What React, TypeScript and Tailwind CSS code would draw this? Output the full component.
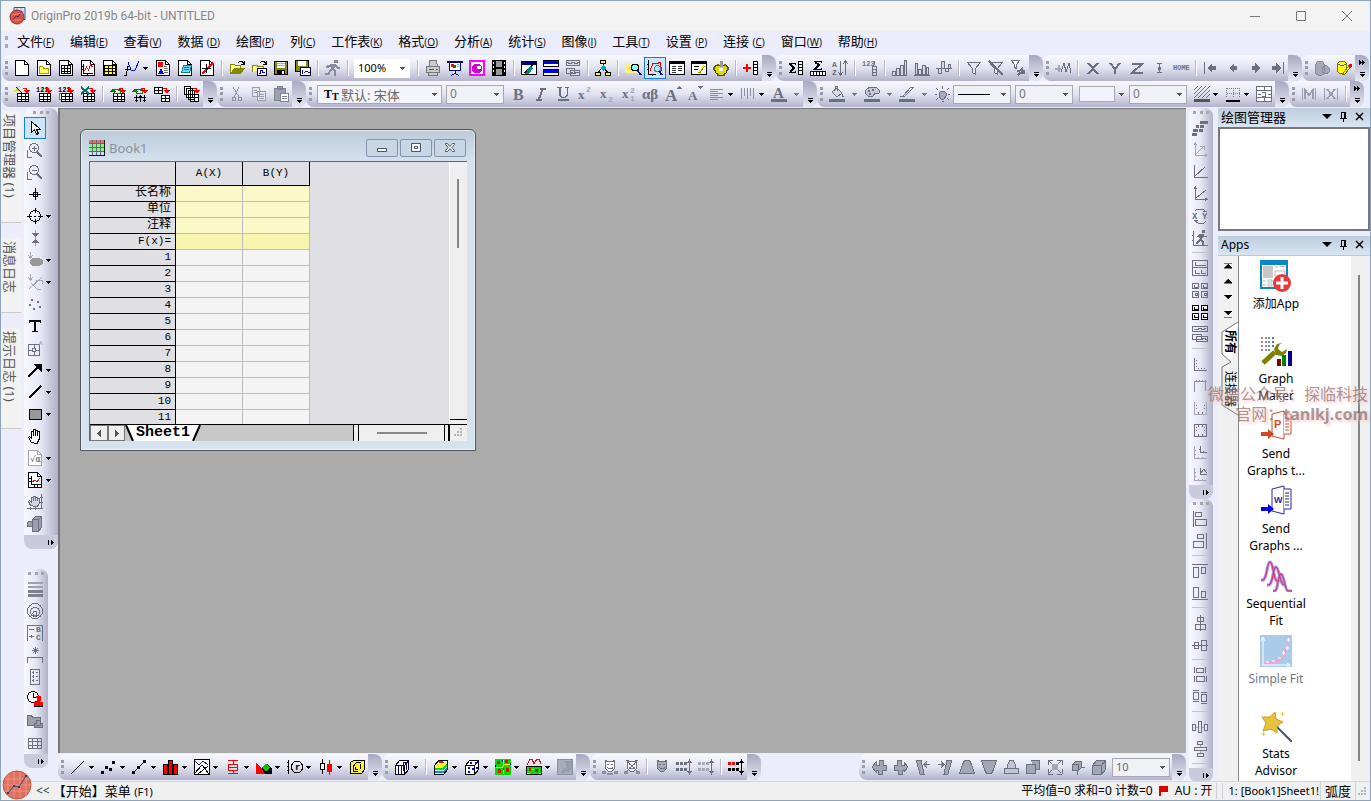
import { Children, type ReactNode } from "react";

const K = "#000";
const G = "#6b7081";
const L = "#a3a6b4";
const R = "#f00";
const Y = "#ff0";
const B = "#00f";
const N = "#000080";
const W = "#fff";
const T = "#008000";
const C = "#5cc";

const p = (d: string, stroke = K, fill = "none", width = 1) => (
  <path d={d} stroke={stroke} fill={fill} strokeWidth={width} />
);
const f = (d: string, fill = K) => <path d={d} fill={fill} />;
const t = (x: number, y: number, text: string, size: number, fill = K, family = "Liberation Mono") => (
  <text x={x} y={y} fontSize={size} fill={fill} fontWeight="bold" fontFamily={family}>
    {text}
  </text>
);

const page = (c = K) => [p("M1.5.5h9l4 4v11h-13z", c, W), p("M10.5.5v4h4", c)];
const sheet = (c = K, fill = W) => [p("M3.5 7.5h11v8h-11zM3.5 10.5h11M3.5 13h11M7.5 7.5v8M11 7.5v8", c, fill)];
const redArrow = [p("M9 2.5h3.5v4", R), f("M10 4h6l-3 4z", R)];
const greenLoop = [p("M2 5v-2h6v2M10 5v2h-6v-2", T), f("M6 3h5l-2 3zM0 6l3-4 3 4z", T)];
const axes = (c = G) => p("M3.5 1v12.5h12M2 3l1.5-2L5 3M13 12l2 1.5-2 1.5", c);
const cube = (c = K, fill = W) => [p("M1.5 6.5l4-5h9v9l-4 5h-9zM1.5 6.5h9v9M10.5 6.5l4-5", c, fill)];
const frameTicks = p("M2.5 2v12.5h12M4 4.5h1M4 7.5h1M4 10.5h1M6.5 12v1M9.5 12v1M12.5 12v1", G);
const mask = (c: string, fill: string) => [
  p("M3.5 1.5l2 1h5l2-1v8l-3 3h-3l-3-3z", c, fill),
  f("M5 5h2v1h-2zM9 5h2v1h-2zM5 8h1v1h4v-1h1v1l-1 1h-4z", c),
];
const dots = (c: string) => f("M0 3h3v3h-3zM4 3h3v3h-3zM8 3h3v3h-3zM0 9h3v3h-3zM4 9h3v3h-3zM8 9h3v3h-3z", c);
const updown = (c: string) => [p("M13.5 2v12", c), f("M11 4l2.5-4 2.5 4zM11 12h5l-2.5 4z", c)];

const icons: Record<string, ReactNode> = {
  "New project": page(),
  "New folder": [page(), p("M3.5 6.5h3l1 1.5h5v5.5h-9z", "#a90", "#ff6")],
  "New workbook": [page(), p("M3.5 5.5h9v8h-9zM3.5 8.5h9M3.5 11h9M6.5 5.5v8M9.5 5.5v8")],
  "New graph": [page(), p("M3.5 4v9.5h9M2 6.5h1M2 9.5h1M7.5 14v1"), p("M4.5 11l2-4 2 3 2-5 2 2", R)],
  "New matrix": [page(), p("M2.5 5.5h11v9h-11zM2.5 8.5h11M2.5 11.5h11M6 5.5v9M10 5.5v9", K, Y)],
  "New function": [p("M0 15.5h2l2-9h2M1 9.5h5"), p("M4 2l3 8h4l4-9", B)],
  "New layout": [page(), f("M3 2h5v5h-5z", R), f("M3 14l3-6 3 6z", B), p("M9 8.5h4M9 10.5h4M9 12.5h4M9 6.5h3", G)],
  "New notes": [page(), p("M4.5 12.5l2-7h8l-2 7zM7 7.5h5M6.5 9.5h5", "#088", "#6df")],
  "New digitizer": [page(), p("M3 14L14 3", R, "none", 2), p("M7.5 4v9M3 8.5h9")],
  Open: [p("M1.5 13.5v-9h4l1 1h5v3", "#880", "#ff8"), f("M1 14l4-6h11l-4 6z", "#880"), p("M9 3l2-2h2l2 3M12 4h3v-3")],
  "Open template": [p("M1.5 12v-7h4l1 1h6v2", "#880", "#ff8"), p("M6.5 8.5h9v7h-9z", K, W), p("M8 13h1v-3h2v2h3", B), p("M9 3l2-2h2l2 3M12 4h3v-3")],
  Save: [p("M1.5 1.5h13v13h-13z", K, "#880"), f("M4 2h8v6h-8z", W), f("M4 10h8v5h-8z"), f("M9 11h2v3h-2z", W), p("M4 3.5h8M4 5.5h8", "#aaa")],
  "Save template": [p("M.5.5h13v11h-13z", K, "#880"), f("M3 1h8v5h-8z", W), p("M5.5 7.5h10v8h-10z", K, W), p("M7 14v-4M9 13l2-2 2 1h2", B)],
  Run: [f("M9 0h4v3h-4zM6 4h5l2 3h2v2h-3l-2-2-1 2 2 2v5h-2v-4l-2-2-3 5h-4v-2h3l3-5-1-2-2 2h-2v-2z", "#888ba0")],
  Print: [p("M4.5 6.5v-6h7l1 6M1.5 6.5h13v6h-13zM3.5 12.5v3h9v-3", "#777", "#ccc"), f("M4 9h5v1h-5zM11 9h2v1h-2z", "#555")],
  Slideshow: [p("M.5 1.5h15M2.5 2v8.5h11V2M8 10.5v3l-4 2M8 13.5l4 2", N, W), f("M0 1h16v2H0z", N), f("M4 4h3v3H4z", R), f("M6 5h3v3H6z", T), p("M10 4.5h2M10 6.5h2", C)],
  Video: [f("M0 0h16v16H0z", "#f0f"), f("M2 2h12v12H2z", W), f("M5 4h6l2 3v3l-3 3H5l-2-3V6z", "#c0c"), f("M8 6h4v3H8z", W)],
  "Film strip": [f("M1 0h14v16H1z"), f("M5 1h6v6H5zM5 9h6v6H5z", "#999"), f("M2 2h1v2H2zM2 6h1v2H2zM2 10h1v2H2zM13 2h1v2h-1zM13 6h1v2h-1zM13 10h1v2h-1z", W)],
  "Digitize image": [p("M.5 1.5h15v13H.5z", K, W), f("M1 2h14v3H1z", N), p("M4 13c1-3 3-2 4-4l5-6", K, "none", 2), f("M9 6l3 2-4 6H4z", "#088")],
  "Tile windows": [p("M.5.5h15v6H.5zM.5 9.5h15v6H.5z", K, W), f("M1 1h14v3H1zM1 10h14v3H1z", B)],
  "Duplicate graph": [p("M1.5.5h13v5h-13zM1.5 8.5h8v5h-8zM5.5 10.5h9v5h-9z", G, "#dde"), p("M2 2l3 2 3-2 3 2 3-2M6 12l3 2 3-2 2 1", G)],
  "Project explorer": [p("M8 4v3M3.5 12l4-5 5 5"), p("M5.5.5h5v3h-5zM.5 12.5h5v3h-5zM10.5 12.5h5v3h-5z", K, Y), f("M5 8l3-3 3 3-3 3z", "#0aa")],
  "Find in project": [f("M0 3h5v1h10v9H0z", "#fe7"), p("M6.5 7.5a3.5 3.5 0 1 0 7 0a3.5 3.5 0 1 0-7 0", K, "#8ff"), p("M12 10l4 5", N, "none", 2)],
  "Quick view": [p("M1.5 0v14.5h7M0 4.5h1M0 9.5h1M5.5 14v2"), p("M3 11l3-8 4 1 3-2 2 9", R), p("M7.5 8.5a3 3 0 1 0 6 0a3 3 0 1 0-6 0", G, "#aef"), p("M12 11l3 4", N, "none", 2)],
  "Results log": [p("M.5 1.5h15v13H.5z", K, W), f("M1 2h14v2H1z"), p("M3 6.5h4M9 6.5h4M3 8.5h4M9 8.5h4M3 10.5h4M9 10.5h4M3 12.5h4", "#333")],
  "Command window": [p("M.5 1.5h15v13H.5z", K, W), f("M1 2h14v2H1z"), p("M3 6.5h5M3 9.5h4"), p("M8 13l5-7", "#a80", "none", 2), p("M8 12l5-7", Y)],
  "Code builder": [p("M3 5h10l2 3-2 5-3 2H6l-3-2-2-5z", "#440", "#dd0"), f("M6 8h4v3H6z", W), f("M7 1h3v6H7z", "#999"), f("M0 7h2v3H0zM14 7h2v3h-2zM4 14h2v2H4zM10 14h2v2h-2zM4 4h2v2H4zM11 4h2v2h-2z", "#660")],
  "Add columns": [p("M0 8h8M4 4v8", R, "none", 2), p("M10.5 1.5h4v13h-4zM10.5 4.5h4M10.5 7.5h4M10.5 10.5h4", K, W)],
  "Sum columns": [p("M7.5 5V3.500h-6l4 4.500-4 4.500h6V11"), p("M2 4l4 4-4 4", K, "none", 2), p("M10.5 1.5h4v13h-4zM10.5 4.5h4M10.5 7.5h4M10.5 10.5h4", K, W)],
  "Sum rows": [p("M11.5 3V1.500h-7l4 3.500-4 4h7V8"), p("M5 2l4 3-4 4", K, "none", 2), p("M.5 11.5h15v4H.5zM3.5 12v3M6.5 12v3M9.5 12v3M12.5 12v3", K, W)],
  Sort: [t(0, 7, "A", 8, G), t(0, 15, "Z", 8, G), p("M8.5 1v13M6 12l2.5 3L11 12M13.5 15V2M11 4l2.5-3L16 4", G)],
  "Set column values": [t(0, 6, "123", 7, G), p("M10.5 6.5h4v9h-4zM10.5 9.5h4M10.5 12.5h4M12.5 1v4", G)],
  "Column stats": [p("M.5 15.5v-4h3v4zM4.5 15.5v-7h3v7zM8.5 15.5v-10h3v10zM12.5 15.5v-15h2v15z", G, "#d5d7e3")],
  "Row stats": [p("M1.5 14.5v-11h2v11zM4.5 14.5v-5h3v5zM8.5 14.5v-9h3v9zM12.5 14.5v-7h2v7zM0 15.5h16", G, "#d5d7e3")],
  Normalize: [p("M0 8.5h16M2.5 8.5v5h3v-5zM5.5 8.5v-7h3v7zM9.5 8.5v3h3v-3zM12.5 8.5v-4h2v4z", G, "#d5d7e3")],
  "Data filter": [p("M1.5 2.5h13l-5 6v6l-3-2v-4z", G, "#e4e5ee")],
  "Disable filter": [p("M1.5 2.5h13l-5 6v6l-3-2v-4z", G, "#e4e5ee"), p("M1 1l14 14", G, "none", 2)],
  "Reapply filter": [p("M1.5.5h8l-3 4v4l-2-1v-3z", G, W), p("M7 10.5h3l2-2v2h3M15 12.5h-5l-2 3", G, "none", 2)],
  "Add marker": [p("M0 8.5h6M3.5 5v7", L, "none", 2), p("M6 12l3-9 2 9 3-9 2 10", G)],
  "Set as X": p("M3 3l10 11M13 3L3 14", G, "none", 2),
  "Set as Y": p("M3 3l5 6v5M13 3L8 9", G, "none", 2),
  "Set as Z": p("M3 4h10L3 13h11", G, "none", 2),
  "Set as error": p("M6 3.5h5M8.5 3v10M6 12.5h5M7.5 7v3M9.5 7v3", G),
  Home: t(0, 10, "HOME", 7, G),
  "First column": [f("M1 2h1v12H1zM4 8l5-5v3h4v4H9v3z", G)],
  "Previous column": f("M4 8l5-5v3h3v4h-3v3z", G),
  "Next column": f("M13 8L8 3v3H5v4h3v3z", G),
  "Last column": f("M14 2h1v12h-1zM12 8L7 3v3H3v4h4v3z", G),
  "Query data": [p("M1.5 4.5l2-3h5l2 3v9l-3 2h-3l-3-2zM8 8l4-3 3 3v4l-3 2-4-2z", "#888b9b", "#a5a8b8")],
  "SQL editor": [p("M1.5 3.5l2-2h5l2 2v8l-2 2h-5l-2-2zM2 4l2 1h4l2-1", "#770", Y), p("M7 15l7-9", "#770", "none", 3), p("M8 14l6-8", Y), f("M13 4h3v3h-3z", R)],
  "Import wizard": [sheet(), redArrow, p("M0 4h6M3 0v6M0 6l6-6", "#dd0"), p("M2 1l6 6")],
  "Import ASCII": [t(0, 6, "123", 7), sheet(), redArrow],
  "Import many": [t(0, 6, "123", 7), p("M1.5 7.5h9v6h-9z", G, W), sheet(), redArrow],
  "Import Excel": [sheet(), redArrow, p("M1 1l8 7M9 1L1 8", "#077", "none", 2)],
  Reimport: [sheet(), greenLoop, redArrow],
  "Reimport directly": [greenLoop, p("M4.5 9v7M8.5 9v7M12.5 9v7M2 11.5h12M3 14.5h3M7 10.5h3M11 14.5h3"), redArrow],
  "Import to sheet": [p("M.5 1.5h8v6h-8zM.5 4.5h8M4.5 1.5v6M7.5 9.5h8v6h-8zM7.5 12.5h8M11.5 9.5v6", K, W), redArrow],
  "Batch processing": [p("M.5.5h6v8h-6zM2.5 2.5h6v9h-6zM4.5 4.5h6v9h-6zM6.5 8.5h8v7h-8zM6.5 11.5h8M10.5 8.5v7", K, W), redArrow],
  Cut: p("M4 1l6 10M10 1L5 11M3.5 11.5h3v3h-3zM9.5 11.5h3v3h-3z", "#8e91a2"),
  Copy: p("M1.5 1.5h7v9h-7zM6.5 5.5h8v9h-8zM8 8.5h5M8 10.5h5M8 12.5h5M3 4.5h3M3 6.5h3", "#999cab", "#e4e5ee"),
  Paste: [p("M1.5 2.5h11v12h-11zM4.5.5h5v3h-5z", "#7f8293", "#9da0b0"), p("M7.5 7.5h8v8h-8zM9 10.5h5M9 12.5h5", "#7f8293", W)],
  Bold: t(2, 14, "B", 16, G, "Liberation Serif"),
  Italic: p("M7 2.5h6M3 13.5h6M9.5 3L6 13", G, "none", 2),
  Underline: [p("M2 1.5h5M10 1.5h4M12.5 2v7l-2 2h-4l-2-2", G), p("M5 2v7M3 14h11", G, "none", 2)],
  Superscript: [t(1, 13, "x", 13, G, "Liberation Serif"), t(9, 6, "2", 8, L)],
  Subscript: [t(1, 12, "x", 13, G, "Liberation Serif"), t(9, 16, "2", 8, L)],
  "Super-subscript": [t(1, 12, "x", 13, G, "Liberation Serif"), t(9, 7, "2", 8, L), t(9, 15, "1", 8, L)],
  Greek: t(-1, 13, "αβ", 15, G, "Liberation Serif"),
  "Increase font": [t(0, 15, "A", 17, G, "Liberation Serif"), f("M11 3l3-3 3 3z", G)],
  "Decrease font": [t(1, 14, "A", 13, G, "Liberation Serif"), f("M11 0h5l-3 3z", G)],
  "Align left": p("M1 3.5h13M1 5.5h8M1 7.5h13M1 9.5h8M1 11.5h13M1 13.5h8", "#8b8e9c"),
  "Vertical lines": p("M1.5 2v11M4.5 2v8M7.5 2v11M10.5 2v8M13.5 2v11", "#8b8e9c"),
  "Font colour": [t(2, 12, "A", 15, G, "Liberation Serif"), f("M0 13h16v3H0z", G)],
  "Fill colour": [p("M3 6l5-4 5 5-5 4zM6 4V0h2v5", G, "#ddd"), f("M13 7l2 4h-2zM0 13h16v3H0z", G)],
  "Pattern colour": [p("M2 4l4-3h6l3 3v3l-2 1-2-1-2 3H4L1 7z", G, "#c7c9d5"), f("M4 4h2v2H4zM8 3h2v2H8zM5 7h2v2H5zM0 13h16v3H0z", G)],
  "Line colour": [p("M4 10l8-9h3l-9 9zM1 10l3 1", G, W), f("M0 13h16v3H0z", G)],
  Lighting: [p("M5 7l2-2h3l2 2v3l-2 3H7l-2-3z", G, "#a9acb9"), p("M8.5 0v3M1 8.5h2M14 8.5h2M2 2l2 2M15 2l-2 2M2 14l2-2M15 14l-2-2M8 15.5h2", G)],
  Hatch: [p("M0 4l4-4M0 8l8-8M0 12L12 0M4 12L16 0M8 12l8-8M12 12l4-4", G), f("M0 13h16v3H0z", "#555")],
  "Border style": [<path key="dots" d="M1.5 2.5h13M1.5 7.5h13M1.5 2v10M8.5 2v10M14.5 2v10" stroke="#777" strokeDasharray="1 1" />, f("M1 14h14v2H1z")],
  "Merge cells": [p("M.5.5h15v15H.5zM0 4.5h16M0 11.5h16M8 0v4M8 12v4", G, W), p("M2 8.5h3M12 8.5h3M6 6.5h3v4H6", G)],
  "Mask M": [p("M1.5 2v12M14.5 2v12", "#9a9dac"), p("M4 13V4l4 5 4-5v9", "#9a9dac", "none", 2)],
  "Mask X": [p("M1.5 2v12M14.5 2v12", "#9a9dac"), p("M4 3l8 10M12 3L4 13", "#9a9dac", "none", 2)],

  Pointer: [p("M4.5 1.5v11l3-3 2 5 2-1-2-4h4z", K, W)],
  "Zoom in": [p("M2.5 6a4.5 4.5 0 1 0 9 0a4.5 4.5 0 1 0-9 0M7 3.5v5M4.5 6h5M.5 8v7h4", G), p("M10 10l5 5", G, "none", 2)],
  "Zoom out": [p("M2.5 6a4.5 4.5 0 1 0 9 0a4.5 4.5 0 1 0-9 0M4.5 6h5M.5 8v7h4", G), p("M10 10l5 5", G, "none", 2)],
  "Screen reader": p("M2 8.5h12M8.5 2v12M6.5 6.5h4v4h-4z"),
  "Data reader": p("M2.5 8a5.5 5.5 0 1 0 11 0a5.5 5.5 0 1 0-11 0M0 8h5M11 8h5M8 0v5M8 11v5M7 8h2"),
  "Data selector": [p("M8.5 0v16", L), f("M5 3h7L8.5 7zM5 13h7L8.5 9z", G)],
  "Mask points": [p("M3.5 0v6M1 3l2.5 3L6 3", L), f("M3 8l3-2h6l4 2v4l-4 2H6l-3-2z", "#999")],
  "Draw data": [p("M3.5 0v6M1 3l2.5 3L6 3M2 15L15 3M4 9l6 6h4M9 6h6v4", L)],
  Points: f("M4 3h2v2H4zM10 5h2v2h-2zM2 8h2v2H2zM12 10h2v2h-2zM6 12h2v2H6z", G),
  Text: [p("M2.5 5V2.5h11V5M5 13.5h6"), p("M8 2v12M3 3h10", K, "none", 2)],
  "Insert graph": [p("M1.5 4.5h11v11h-11zM1.5 10h4M8 10h5M7 4.5V8M7 11v4M5.5 8.5h3v3h-3z", G), t(12, 5, "A", 6, L)],
  Arrow: [p("M1 15L12 4", K, "none", 2), f("M6 2h9v9z")],
  Line: p("M2 14L14 2", K, "none", 2),
  Rectangle: p("M2.5 3.5h12v10h-12z", K, "#999"),
  Hand: p("M4.5 14.5l-3-5 1-1 2 2V3.5h1.5v4-6h2v6-5h2v5-4h2v8l-2 4z", K, W),
  "Insert equation": [page(L), t(3, 12, "√α", 8, "#888", "DejaVu Sans")],
  "Insert plot": [page(), p("M4.5 4v8.5h9M2 6.5h2M2 9.5h2M7.5 13v2M10.5 13v2"), p("M5 10l3-2 2 2 3-4", R)],
  "Move axes": [p("M3.5 11.5l-2-4 1-1 2 2V3h1.5v4-5h2v5-4h2v4-3h2v6l-2 3zM14.5 0v15M0 14.5h16M3.5 13v3M8.5 13v3M13 3.5h3M13 8.5h3", G, "#d4d6e1")],
  "Rotate 3D": p("M5.5 3.5l3-3h6v11l-3 4h-6zM5.5 3.5h6v12M11.5 3.5l3-3M5 5H2L.5 7v3h4", G, "#9c9fae"),
  "Line width": [f("M1 1h15v2H1zM1 5h15v2H1z", "#9da1af"), f("M1 9h15v3H1zM1 13h15v3H1z", "#7c8090")],
  Contour: p("M.5 8a7.5 7.5 0 1 0 15 0a7.5 7.5 0 1 0-15 0M3.5 9a4.5 4.5 0 1 0 9 0a4.5 4.5 0 1 0-9 0M6 10.5a2 2 0 1 0 4 0a2 2 0 1 0-4 0", G),
  Legend: [p("M15.5 16V.5H.5V16M2 4.5h5M2 11.5h5M4.5 10v3", G), t(9, 7, "B", 8, G), t(9, 15, "C", 8, G)],
  Asterisk: p("M.5 16v-5.5h15V16M8.5 0v7M5 3.5h7M6 1l5 5M11 1L6 6", G),
  Scale: p("M3.5.5h9v15h-9zM5 3.5h2M9 3.5h2M5 7.5h2M9 7.5h2M5 11.5h2M9 11.5h2M6 2v3M6 6v3M6 10v3", G),
  "Time stamp": [p("M.5 6a5.5 5.5 0 1 0 11 0a5.5 5.5 0 1 0-11 0M6 2v4h3", K, W), f("M9 5h5v4l-1 2h3v4H7v-4h3V9z", R), p("M7 15.5h9")],
  "Project stamp": p("M.5 2.5h4l1 2h8v8H.5zM9.5 7.5h4v3h2v4H7.5v-4h2z", G, "#9c9fae"),
  "New table": p("M1.5 3.5h13v10h-13zM1.5 6.5h13M1.5 10.5h13M5.5 3.5v10M10.5 3.5v10", G),

  "Slide layers": f("M8 1h8v3H8zM4 5h3v3H4zM8 5h4v3H8zM1 9h5v3H1zM7 9h4v3H7zM0 13h5v3H0z", G),
  "3D axes": [axes(L), p("M4 12l8-8M8 4h4v4", L)],
  "Axes right": [p("M2.5 1v12.5h13", G), p("M3 12L13 3", G)],
  "Axes up": [axes(), p("M4 12L14 4", G)],
  "Exchange XY": [t(0, 11, "X", 9, G), t(10, 11, "Y", 9, G), p("M3 3l2-2h6l2 2M3 13l3 2h6l2-2M11 3.5h4M2 12.5h4", G)],
  "Run axes": [p("M1.5 1v14.5H16M0 5.5h2M0 10.5h2", G), f("M10 0h3v3h-3zM7 4h5v2h3v1h-4l-1 3 2 1v4h-2v-3l-2-1-2 3H4v-1l4-5-3-1z", G)],
  "One panel": p("M.5.5h15v15H.5zM.5 7.5h15M3.5 2v3h10M3.5 10v3h4M9.5 10v3h4", G),
  "Four panels": p("M.5 1.5h6v5h-6zM9.5 1.5h6v5h-6zM.5 9.5h6v6h-6zM9.5 9.5h6v6h-6zM2.5 3v2h3M11.5 3v2h3M3 11.5h2v2H3zM12 11.5h2v2h-2z", G),
  "Six panels": p("M.5 1.5h6v5h-6zM9.5 1.5h6v5h-6zM.5 9.5h6v6h-6zM9.5 9.5h6v6h-6zM2.5 3v2h3M11.5 3v2h3M2.5 11v2h3M11.5 11v2h3", K, W),
  "Merge graphs": p("M.5.5h15v5H.5zM.5 8.5h9v5h-9zM4.5 10.5h11v5h-11zM2 3l3 1 3-2 3 2 3-2M6 13l3 1 3-2 3 2", G),
  "Frame left": frameTicks,
  "Frame top": p("M2.5 14V3.5h12M4.5 2v2M7.5 2v2M10.5 2v2M13.5 2v11", "#8f92a1"),
  "Frame right": [p("M2.5 2v12.5h12V2", L), p("M4 5.5h1M4 8.5h1M12 5.5h1M12 8.5h1M6.5 12v2M10.5 12v2", G)],
  "Frame all": [p("M2.5 2.5h12v12h-12z", G), p("M4 5.5h1M4 8.5h1M12 5.5h1M12 8.5h1M6.5 12v2M10.5 12v2M6.5 3v2M10.5 3v2", G)],
  "Inset axes": [p("M2.5 2v12.5h12M2 6.5h2M2 10.5h2M6.5 13v2M10.5 13v2", L), p("M8.5 2v6h6M7 5.5h2M11.5 7v2", G)],
  "Inset image": [p("M2.5 2v12.5h12M2 6.5h2M2 10.5h2M6.5 13v2M10.5 13v2", L), p("M8.5 2v6h6M9 7l3-4 3 4", G)],
  "Align lefts": p("M1.5 0v16M3.5 1.5h6v4h-6zM3.5 8.5h11v6h-11z", G),
  "Align rights": p("M14.5 0v16M5.5 1.5h6v4h-6zM1.5 8.5h10v6h-10z", G),
  "Align tops": p("M0 1.5h16M1.5 4.5h5v10h-5zM9.5 4.5h4v6h-4z", G),
  "Align bottoms": p("M0 14.5h16M1.5 2.5h5v10h-5zM9.5 6.5h4v6h-4z", G),
  "Center vertical": p("M8.5 0v16M5.5 2.5h6v4h-6zM3.5 9.5h10v5h-10z", G),
  "Center horizontal": p("M0 8.5h16M2.5 5.5h4v6h-4zM9.5 3.5h5v10h-5z", G),
  "Same width": p("M2.5 0v6M13.5 0v6M4.5 1.5h7v4h-7zM2.5 9v6M14.5 9v6M4.5 9.5h8v5h-8z", G),
  "Same height": p("M1 1.5h6M1.5 3.5h5v7h-5zM9.5 5.5h5v7h-5zM9 14.5h6M1 12.5h6M9 3.5h6", G),
  "Distribute across": [p("M0 8.5h16", L), p("M.5 5.5h3v6h-3zM6.5 2.5h3v11h-3zM12.5 5.5h3v6h-3z", G, "#e4e5ee")],
  "Distribute down": [p("M8.5 0v16", L), p("M5.5.5h5v3h-5zM2.5 6.5h12v3h-12zM5.5 12.5h6v3h-6z", G, "#e4e5ee")],

  "Line plot": p("M1 15L14 2"),
  Scatter: f("M0 12h3v3H0zM4 7h3v3H4zM8 9h3v3H8zM11 2h3v3h-3z"),
  "Line + symbol": [p("M1 14L13 2"), f("M0 12h3v3H0zM5 7h3v3H5zM11 1h3v3h-3z")],
  "Column plot": p("M.5 15.5v-10h4v10zM5.5 15.5v-14h4v14zM10.5 15.5v-10h4v10z", K, R),
  "Multi panel": [p("M.5.5h15v15H.5z", K, W), p("M1 2l4 4 4-4 5 4", B), p("M1 14L8 6l7 9M4 15l10-8")],
  "Box chart": p("M3 1.5h10M3 14.5h10M8 1v4M8 12v3M3.5 5.5h9v6h-9zM4 8.5h8", R),
  "Area plot": [f("M0 15V5l5 4 6-4 5 4v6z"), f("M0 15V3l6 7 3 5z", R), f("M6 9l4-5 4 5-4 3z", "#0c0")],
  Polar: [p("M1.5 1v14M0 3.5h1M0 7.5h1M0 11.5h1M4.5 8a5.5 6 0 1 0 11 0a5.5 6 0 1 0-11 0"), t(8, 11, "r", 9)],
  Candlestick: [p("M4.5 0v15"), p("M2.5 4.5h4v6h-4z", K, W), p("M11.5 1v15", R), p("M9.5 5.5h4v7h-4z", R, R)],
  Template: [p("M1.5 3.5l3-2h11v9l-3 4h-11zM4 8l3-4 5-1", K, "#fe3"), p("M4 6v6h5M6 8v2h3M11 5v5")],
  "3D bars": [cube(), p("M4.5 15V6h3v9M9.5 12V3h3v8", N)],
  "3D surface": [p("M1.5 6.5l4-5h9v9l-4 5h-9z", K, W), f("M5 2h4l2 2H6z", R), f("M4 5h6l4-2v2l-4 3H3z", Y), f("M2 9h7l5-4v3l-4 3H2z", "#0d0"), f("M2 12h8l4-3v1l-4 4H2z", "#08f")],
  "3D scatter": [cube(), f("M4 8h2v2H4zM8 9h2v2H8zM6 3h2v2H6zM11 3h2v2h-2zM4 12h2v2H4zM12 8h2v2h-2z", B)],
  Heatmap: [f("M0 0h16v16H0z", "#0d0"), f("M2 2h3v3H2zM10 1h3v3h-3zM3 10h3v4H3zM11 9h3v4h-3z", R), p("M1 8.5h6l2-3h6M8 1v5M8 11v4", Y), f("M7 1h1v2H7zM0 6h1v2H0zM15 4h1v2h-1zM8 9h1v2H8z", B)],
  "Profile plot": [p("M1 6l3-6h2l2 5 3-5h2l2 5", R), p("M.5 7.5h15v8H.5z", K, "#0d0"), f("M3 9h2v3H3zM9 10h3v3H9z", R), p("M6 10h2M13 14h2M1 14h3", Y)],
  "Image plot": [f("M0 0h16v16H0z", "#8a8e9c"), f("M1 1h14v14H1z", "#a9acb9"), f("M8 2h7v7l-4 4-7 1 1-3 5-3z", "#999caa")],
  "Mask range": [mask(G, W), f("M0 12h4v3H0zM12 12h4v3h-4zM5 14h6v2H5z", "#8b8e9d")],
  "Unmask range": [mask(G, W), f("M0 12h4v3H0zM12 12h4v3h-4z", "#8b8e9d"), p("M2 1l12 12M14 1L2 13", G)],
  "Mask colour": mask(G, "#a9acb9"),
  "Swap mask": [dots(G), updown(G)],
  "Hide mask": [dots(L), updown(G)],
  "Disable mask": [dots(K), f("M0 3h3v3H0zM4 3h3v3H4z", R), updown(K)],
  "Flip left": p("M1 8l4-5v3h3v-5h4v5h3v5h-4v4H7v-4H5v2z", G, L),
  "Flip right": p("M15 8l-4-5v3H8V1H4v5H1v5h4v4h4v-4h2v2z", G, L),
  "Rotate left": p("M1 1h5l3 14H5L2 4zM9 5.5h6M12 2l-3 3.5L12 9", G, L),
  "Rotate right": p("M15 1h-5L7 15h4l3-11zM1 5.5h6M4 2l3 3.5L4 9", G, L),
  Widen: p("M.5 14.5h15l-3-9-2-4h-5l-2 4z", G, L),
  Narrow: p("M.5 1.5h15l-3 9-2 4h-5l-2-4z", G, L),
  "Stretch up": p("M1.5 14.5h14v-5h-3v-3l-2-5h-4l-2 5v3h-3zM4 9.5h8", G, "#c3c5d2"),
  Perspective: p("M1.5 5.5h9v9h-9zM5.5 1.5h9v9h-4", G, L),
  "Fit frame": [p("M1 1h5M1 1v5M15 1h-5M15 1v5M1 15v-5M1 15h5M15 15h-5M15 15v-5M2 2l12 12M14 2L2 14", G), f("M5 5h6v6H5z", L)],
  "Reset rotation": p("M3.5 5.5h6v6h-6zM3.5 5.5l3-3h6v6l-3 3M8 12v4M12 8h4", G, L),
  "Reset 3D": cube(G, L),
};

function Icon({ name }: { name: string }) {
  return (
    <svg className="overflow-visible" width="16" height="16" viewBox="0 0 16 16" fill="none" shapeRendering="crispEdges">
      {Children.toArray(icons[name])}
    </svg>
  );
}

function Caret({ color = K }: { color?: string }) {
  return (
    <svg width="5" height="3" viewBox="0 0 5 3" shapeRendering="crispEdges">
      <path d="M0 0h5v1H4v1H3v1H2V2H1V1H0z" fill={color} />
    </svg>
  );
}

// A trailing "+" gives a tool a drop-down arrow, "*" a greyed one; "|" is a divider.
function Tool({ item, vertical }: { item: string; vertical?: boolean }) {
  if (item === "|") {
    return vertical ? (
      <span className="mx-[3px] mt-[3px] mb-1 h-px w-[18px] flex-none bg-[#c4c2c4]" />
    ) : (
      <span className="mx-[3px] box-content h-4 w-px flex-none border-r border-white bg-[#b9b8c2]" />
    );
  }
  const name = item.replace(/[+*]$/, "");
  const open = item.endsWith("+");
  const grey = item.endsWith("*");
  const active = name === "Pointer" || name === "Quick view";
  return (
    <span className="flex flex-none items-center">
      <button
        aria-label={name}
        className={`flex h-[22px] w-[22px] flex-none items-center justify-center ${
          active ? "border border-[#1580d8] bg-[#cde5f8]" : ""
        }`}
      >
        <Icon name={name} />
      </button>
      {(open || grey) && (
        <button aria-label={`${name} options`} className={`flex flex-none ${open ? "w-[9px]" : "w-[13px] justify-center"}`}>
          <Caret color={open ? K : "#777a86"} />
        </button>
      )}
    </span>
  );
}

interface BarProps {
  items?: (string | ReactNode)[];
  chevron?: boolean;
  className?: string;
}

function Bar({ items = [], chevron, className = "" }: BarProps) {
  return (
    <div className={`flex h-[26px] flex-none items-stretch rounded-lg bg-linear-to-b from-[#f8f9ff] via-[#e2e3f0] to-[#b3b4cb] ${className}`}>
      <span className="mx-[3px] my-[6px] w-[3px] flex-none border-l-3 border-dotted border-[#9b9ca6]" />
      <div className="flex items-center">
        {items.map((item, i) => (typeof item === "string" ? <Tool key={i} item={item} /> : <span key={i} className="flex-none">{item}</span>))}
      </div>
      <button
        aria-label="Toolbar options"
        className="ml-auto flex w-[14px] flex-none flex-col items-center justify-end gap-px rounded-r-lg bg-linear-to-b from-[#a8a9c2] to-[#e6e7f3] pb-1"
      >
        {chevron && (
          <svg className="mb-[6px]" width="6" height="5" shapeRendering="crispEdges">
            <path d="M0 0h1v1h1v1h1v1H2v1H1v1H0zM3 0h1v1h1v1h1v1H5v1H4v1H3z" />
          </svg>
        )}
        <span className="h-px w-[5px] bg-black" />
        <Caret />
      </button>
    </div>
  );
}

function SideBar({ items, wide }: { items: string[]; wide?: boolean }) {
  return (
    <div
      className={`flex flex-none flex-col overflow-hidden rounded-lg bg-linear-to-r from-[#f8f9ff] via-[#e6e7f3] to-[#b0b1c8] ${
        wide ? "w-[34px]" : "w-6"
      }`}
    >
      <span className={`mx-1 my-[3px] h-[3px] w-4 flex-none border-t-3 border-dotted border-[#a5a5ae] ${wide ? "self-center" : ""}`} />
      {items.map((item, i) => (
        <Tool key={i} item={item} vertical />
      ))}
      <button aria-label="Toolbar options" className="flex h-[14px] flex-none items-center justify-end gap-px bg-[#c9cadb] pr-[3px]">
        <span className="h-[5px] w-px bg-black" />
        <span className="-rotate-90">
          <Caret />
        </span>
      </button>
    </div>
  );
}

interface ComboProps {
  label: string;
  value: string;
  className: string;
  children?: ReactNode;
}

function Combo({ label, value, className, children }: ComboProps) {
  return (
    <span className={`relative block h-[19px] border ${className}`}>
      <select aria-label={label} className="block h-full w-full appearance-none pr-4 pl-[3px] outline-none">
        <option>{value}</option>
      </select>
      <span className="pointer-events-none absolute top-[7px] right-1">
        <Caret color="#555" />
      </span>
      {children}
    </span>
  );
}

const menus = [
  ["文件", "F"], ["编辑", "E"], ["查看", "V"], ["数据 ", "D"], ["绘图", "P"], ["列", "C"], ["工作表", "K"], ["格式", "O"],
  ["分析", "A"], ["统计", "S"], ["图像", "I"], ["工具", "T"], ["设置 ", "P"], ["连接 ", "C"], ["窗口", "W"], ["帮助", "H"],
];

function Title() {
  return (
    <header className="flex h-[30px] flex-none items-center bg-[#f3f3f3] pl-2">
      <svg width="18" height="18" viewBox="0 0 18 18">
        <path d="M5 .5h11v12H5z" fill="#dce8ff" stroke="#2454a5" />
        <path d="M8 1v12M12 1v12M5 5h11M5 9h11" stroke="#92ade0" />
        <circle cx="8" cy="10" r="7" fill="#d95144" stroke="#9f3028" />
        <path d="M4 13l3-4 2 1 4-6" stroke="#46365f" fill="none" />
        <path d="M3 8l10-2M4 13h8" stroke="#ff9b85" strokeWidth=".7" />
      </svg>
      <h1 className="ml-1 font-['Roboto','Noto_Sans',sans-serif] text-xs text-[#858585]">OriginPro 2019b 64-bit - UNTITLED</h1>
      <div className="mr-3 ml-auto flex gap-6 text-[#777]">
        <button aria-label="Minimize" className="flex h-[22px] w-[22px] items-center justify-center">
          <span className="h-px w-[10px] bg-current" />
        </button>
        <button aria-label="Maximize" className="flex h-[22px] w-[22px] items-center justify-center">
          <span className="h-[10px] w-[10px] rounded-[1px] border border-current" />
        </button>
        <button aria-label="Close" className="flex h-[22px] w-[22px] items-center justify-center">
          <svg width="10" height="10" stroke="currentColor">
            <path d="M0 0l10 10M10 0L0 10" />
          </svg>
        </button>
      </div>
    </header>
  );
}

const rowLabels = ["长名称", "单位", "注释", "F(x)=", "1", "2", "3", "4", "5", "6", "7", "8", "9", "10", "11"];

function Workbook() {
  return (
    <section className="absolute top-[20px] left-[20px] flex h-[322px] w-[396px] flex-col rounded-t-md border border-[#50545a] bg-linear-to-b from-[#bccbda] via-[#d5e2ef] via-10% to-[#d5e2ef] px-2 pb-[9px] ring-1 ring-white/60 ring-inset">
      <div className="flex h-[31px] flex-none items-center pt-[5px]">
        <svg width="16" height="16" shapeRendering="crispEdges">
          <path d="M0 0h16v16H0z" fill="#151a1a" />
          <path d="M0 0h15v15H0z" fill="#667" />
          <path d="M0 0h3v3H0zM4 0h3v3H4zM8 0h3v3H8zM12 0h3v3h-3z" fill="#f66" />
          <path d="M0 4h3v3H0zM4 4h3v3H4zM8 4h3v3H8zM12 4h3v3h-3zM0 8h3v3H0zM4 8h3v3H4zM8 8h3v3H8zM12 8h3v3h-3z" fill="#7f7" />
          <path d="M0 12h3v3H0zM4 12h3v3H4zM8 12h3v3H8zM12 12h3v3h-3z" fill="#d7d7ff" />
        </svg>
        <h2 className="ml-1 pt-px text-[13px] text-[#8b9299]">Book1</h2>
        <div className="mr-px ml-auto flex gap-[2px]">
          {["Minimize", "Maximize", "Close"].map((label) => (
            <button
              key={label}
              aria-label={`${label} Book1`}
              className="flex h-[18px] w-8 items-center justify-center rounded-[2px] border border-[#8594ae] bg-[#c8d6e6]"
            >
              <svg width="12" height="10" fill="white" stroke="#4a5365">
                {label === "Minimize" && <path d="M1.5 5.5h9v3h-9z" />}
                {label === "Maximize" && <path d="M1.5.5h9v8h-9zM4.5 3.5h3v2h-3z" />}
                {label === "Close" && <path d="M1.5.5h2l2.5 3 2.5-3h2v1L8 4.5l2.5 3v1h-2L6 5.5l-2.5 3h-2v-1L4 4.5l-2.5-3z" />}
              </svg>
            </button>
          ))}
        </div>
      </div>
      <div className="flex min-h-0 flex-1 flex-col border-t border-l border-[#666] bg-[#e0dfe4] font-['Liberation_Mono','Noto_Sans_CJK_SC',monospace]">
        <div className="flex min-h-0 flex-1 overflow-hidden">
          <table className="h-fit w-[220px] table-fixed border-separate border-spacing-0 text-[11px]">
            <thead>
              <tr className="h-6">
                <th className="w-[86px] border-r border-b border-black" />
                <th className="w-[67px] border-r border-b border-black font-normal">A(X)</th>
                <th className="w-[67px] border-r border-b border-black font-normal">B(Y)</th>
              </tr>
            </thead>
            <tbody>
              {rowLabels.map((label, i) => {
                const fill = i < 3 ? "bg-[#fbf9c8]" : i === 3 ? "bg-[#f7f5ae]" : "bg-[#f4f4f4]";
                return (
                  <tr key={label} className="h-4">
                    <th className="border-r border-b border-black py-0 pr-1 text-right leading-[15px] font-normal">
                      <span className={i < 3 ? "text-xs leading-[15px]" : ""}>{label}</span>
                    </th>
                    <td className={`border-r border-b border-[#bdbdbd] p-0 ${fill}`} />
                    <td className={`border-r border-b border-[#bdbdbd] p-0 ${fill}`} />
                  </tr>
                );
              })}
            </tbody>
          </table>
          <div className="ml-auto flex w-[18px] flex-col border-l border-white bg-[#efefef]">
            <span className="mt-[17px] ml-[7px] h-[69px] w-[2px] bg-[#858585]" />
            <span className="mt-auto mb-1 h-px bg-black" />
          </div>
        </div>
        <div className="flex h-[17px] flex-none border-t border-black bg-[#efefef]">
          <button aria-label="Previous sheet" className="flex w-[18px] items-center justify-center border border-[#777]">
            <svg width="4" height="7" shapeRendering="crispEdges"><path d="M4 0v7L0 3.5z" fill="#555" /></svg>
          </button>
          <button aria-label="Next sheet" className="flex w-[17px] items-center justify-center border border-[#777]">
            <svg width="4" height="7" shapeRendering="crispEdges"><path d="M0 0v7l4-3.5z" fill="#555" /></svg>
          </button>
          <div className="flex flex-1 bg-[#c8c8c8]">
            <button className="relative h-4 w-[76px] text-[15px] leading-4 font-bold">
              <svg className="absolute inset-0" width="76" height="16">
                <path d="M1 0l7 16h60l7-16z" fill="white" />
                <path d="M1 0l7 16M68 16l7-16" stroke="black" strokeWidth="2" />
              </svg>
              <span className="relative">Sheet1</span>
            </button>
          </div>
          <div className="flex w-[114px] items-center justify-center border-l border-black">
            <div className="ml-1 flex h-full flex-1 items-center justify-center border-x border-black">
              <span className="h-[2px] w-[50px] bg-[#888]" />
            </div>
            <div className="ml-[3px] flex h-full w-[19px] items-end justify-end border-l-2 border-black p-1">
              <Grip />
            </div>
          </div>
        </div>
      </div>
    </section>
  );
}

function Grip() {
  return (
    <svg width="9" height="9" fill="#b5b5b5">
      <path d="M6 0h2v2H6zM3 3h2v2H3zM6 3h2v2H6zM0 6h2v2H0zM3 6h2v2H3zM6 6h2v2H6z" />
    </svg>
  );
}

function PanelHeader({ title, size }: { title: string; size: string }) {
  return (
    <div className="flex h-[19px] flex-none items-center bg-linear-to-b from-[#bccddd] to-[#d9e5f2] pb-[2px] pl-[3px]">
      <h2 className={`leading-4 whitespace-nowrap ${size}`}>{title}</h2>
      <div className="mr-[6px] ml-auto flex items-center gap-[7px]">
        <button aria-label={`${title} menu`}>
          <svg width="10" height="5"><path d="M0 0h10L5 5z" /></svg>
        </button>
        <button aria-label={`Pin ${title}`}>
          <svg width="9" height="10" stroke="black" fill="none" shapeRendering="crispEdges">
            <path d="M2.5 6V.5h4V6M5.5 0v6M1 6.5h7M4.5 7v3" />
          </svg>
        </button>
        <button aria-label={`Close ${title}`}>
          <svg width="9" height="9" stroke="black" strokeWidth="1.5"><path d="M1 1l7 7M8 1L1 8" /></svg>
        </button>
      </div>
    </div>
  );
}

const office = (color: string, letter: string, arrow: string) => (
  <>
    <path d="M12 4l12-3v28l-12-3z" fill="white" stroke={color} />
    <path d="M24 4h7v20h-7" fill="white" stroke={color} />
    <path d="M25 8h4M25 11h4M25 14h4M25 17h4M25 20h4" stroke={color} />
    <text x="14" y="18" fontSize={letter === "W" ? 9 : 11} fontWeight="bold" fontFamily="Liberation Sans" fill={color}>{letter}</text>
    <path d="M1 22h7v-3l6 5-6 5v-3H1z" fill={arrow} />
  </>
);

const apps = [
  {
    name: "添加App",
    art: (
      <>
        <path d="M1 1h26v27H1z" fill="white" stroke="#0b87c8" strokeWidth="2" />
        <path d="M0 0h28v5H0z" fill="#0b87c8" />
        <path d="M3 6h10v12H3z" fill="#c8c8c8" />
        <path d="M15 7h3M20 6.5h5M15 11h10v5H15zM3 21h3M8 20h4v2H8zM3 25h3M8 24h4v2H8z" stroke="#bbb" fill="none" />
        <circle cx="22" cy="23" r="9" fill="#e8383c" />
        <path d="M20.5 17h3v4.5H28v3h-4.5V29h-3v-4.5H16v-3h4.5z" fill="white" />
      </>
    ),
  },
  {
    name: "Graph Maker",
    art: (
      <>
        <path d="M2 2v16M6 2v14" stroke="#c37777" strokeWidth="2" strokeDasharray="2 2" />
        <path d="M9 2v16" stroke="#4b8" strokeWidth="2" strokeDasharray="2 2" />
        <path d="M13 2v12" stroke="#66c" strokeWidth="2" strokeDasharray="2 2" />
        <path d="M3 28l12-11" stroke="#808000" strokeWidth="5" />
        <path d="M22 8l-5 1-3 5 2 6 6 1 4-3 1-4-5 3-4-3 1-4z" fill="#808000" />
        <path d="M17 24h4v7h-4z" fill="#800000" />
        <path d="M22 20h4v11h-4z" fill="#008000" />
        <path d="M28 16h4v15h-4z" fill="#000090" />
      </>
    ),
  },
  { name: "Send Graphs t...", art: office("#d04925", "P", "#d04925") },
  { name: "Send Graphs ...", art: office("#27279b", "W", "#0000ef") },
  {
    name: "Sequential Fit",
    art: (
      <g fill="none" strokeLinejoin="round">
        <path d="M1 20h2c4-1 4-18 7-18s4 19 7 19M7 25h2c4-1 4-18 7-18s4 18 8 18M13 31h2c3-1 3-17 6-17s4 17 7 17h4" stroke="#a98bea" strokeWidth="3" />
        <path d="M1 20h2c4-1 4-18 7-18s4 19 7 19M7 25h2c4-1 4-18 7-18s4 18 8 18M13 31h2c3-1 3-17 6-17s4 17 7 17h4" stroke="#d92e5c" />
      </g>
    ),
  },
  {
    name: "Simple Fit",
    off: true,
    art: (
      <>
        <path d="M0 0h32v32H0z" fill="#aacbea" />
        <path d="M3 30V3M1 6l2-4 2 4M2 30h28M27 28l3 2-3 2" stroke="white" fill="none" />
        <path d="M4 28c15 0 22-4 24-23" stroke="#ff9fd0" strokeWidth="2" fill="none" />
        <path d="M6 27h3M12 26h3M18 23h3M22 18h3M26 13h3M27 5h3M28.5 3v4M27 11v4M23.5 16v4" stroke="white" />
      </>
    ),
  },
  {
    name: "Stats Advisor",
    art: (
      <>
        <path d="M15 15l17 17" stroke="#4b5665" strokeWidth="2" />
        <path d="M15 2l1 7 7 3-6 4v7l-6-4-8 2 3-8-4-6h8z" fill="#e8c23c" stroke="#c6a02c" />
        <path d="M22.5 2v4M20.5 4h4M3.5 22v4M1.5 24h4" stroke="#edc83c" />
      </>
    ),
  },
];

function SidePanels() {
  return (
    <aside className="flex w-[152px] flex-none flex-col bg-[#f0f0f0]">
      <PanelHeader title="绘图管理器" size="text-[13px]" />
      <div className="h-[104px] flex-none border-2 border-[#77777d] bg-white" />
      <div className="h-[5px] flex-none bg-[#ebedfa]" />
      <PanelHeader title="Apps" size="text-xs" />
      <div className="flex min-h-0 flex-1 border-t border-[#c5c5c5]">
        <div className="flex w-5 flex-none flex-col items-center pt-[2px]">
          {["M1 1h8M5 2l4 4H1z", "M5 1l4 4H1z", "M1 1h8L5 5z", "M1 1h8L5 5zM1 7h8"].map((d) => (
            <button key={d} aria-label="Scroll" className="h-4 flex-none">
              <svg width="10" height="8" viewBox="0 0 10 8" fill="black" shapeRendering="crispEdges">
                <path d={d} stroke="black" strokeWidth=".5" />
              </svg>
            </button>
          ))}
          <button className="relative h-10 w-full flex-none pl-1 text-xs font-bold [text-orientation:sideways] [writing-mode:vertical-rl]">
            <svg className="absolute inset-0" width="20" height="40" fill="white" stroke="#777">
              <path d="M20 0L4 10v22l9 8" />
            </svg>
            <span className="relative">所有</span>
          </button>
          <button className="relative h-[54px] w-full flex-none pl-1 text-xs [text-orientation:sideways] [writing-mode:vertical-rl]">
            <svg className="absolute inset-0" width="20" height="54" fill="none" stroke="#777">
              <path d="M13 0L4 5v38l16 10" />
            </svg>
            <span className="relative">连接器</span>
          </button>
        </div>
        <div className="flex w-[113px] flex-none flex-col border-l border-[#858585] bg-white">
          {apps.map(({ name, art, off }) => (
            <button
              key={name}
              className={`flex h-[75px] w-[74px] flex-none flex-col items-center pt-1 text-xs leading-[17px] ${off ? "text-[#777]" : ""}`}
            >
              <svg width="32" height="32" className="mb-[3px] flex-none">{art}</svg>
              <span className="w-[66px]">{name}</span>
            </button>
          ))}
        </div>
        <div className="flex-1 pt-[19px] pl-[7px]">
          <div className="h-full max-h-[486px] w-[2px] bg-[#858585]" />
        </div>
      </div>
    </aside>
  );
}

export default function App() {
  return (
    <main className="relative flex h-screen w-full flex-col overflow-hidden border border-[#8ba4b9] bg-[#ebedfa] font-['Noto_Sans','Noto_Sans_CJK_SC',sans-serif] text-black">
      <Title />
      <nav className="flex h-6 flex-none items-center gap-4 bg-[#ecedfc] pb-[3px] pl-1">
        <span className="-mr-[7px] h-3 border-l-3 border-dotted border-[#a9aab5]" />
        {menus.map(([label, key]) => (
          <button key={label} className="flex-none text-[13px] leading-5 whitespace-pre">
            {label}
            <span className="font-['Open_Sans','Noto_Sans',sans-serif] text-[10px]">
              (<u>{key}</u>)
            </span>
          </button>
        ))}
      </nav>

      <div className="flex h-[26px] flex-none overflow-hidden pl-px">
        <Bar
          items={[
            "New project", "New folder", "New workbook", "New graph", "New matrix", "New function+", "New layout", "New notes", "New digitizer", "|",
            "Open", "Open template", "Save", "Save template", "|", "Run", "|",
            <Combo label="Zoom" value="100%" className="mr-1 ml-[2px] w-14 border-white bg-white text-[11px]" />,
            "|", "Print", "Slideshow", "Video", "Film strip", "|", "Digitize image", "Tile windows", "Duplicate graph", "|",
            "Project explorer", "|", "Find in project", "Quick view", "Results log", "Command window", "Code builder", "|", "Add columns",
          ]}
        />
        <Bar
          items={[
            "Sum columns", "Sum rows", "Sort", "|", "Set column values", "|", "Column stats", "Row stats", "Normalize", "|",
            "Data filter", "Disable filter", "Reapply filter",
          ]}
        />
        <Bar
          items={[
            "Add marker", "|", "Set as X", "Set as Y", "Set as Z", "Set as error", "Home", "|",
            "First column", "Previous column", "Next column", "Last column",
          ]}
        />
        <Bar className="flex-1" chevron items={["Query data", "SQL editor"]} />
      </div>

      <div className="flex h-[27px] flex-none overflow-hidden pl-px">
        <Bar
          items={[
            "Import wizard", "Import ASCII", "Import many", "Import Excel", "|", "Reimport", "Reimport directly", "Import to sheet", "|", "Batch processing",
          ]}
        />
        <Bar items={["Cut", "Copy", "Paste"]} />
        <Bar
          items={[
            <Combo label="Font" value="默认: 宋体" className="ml-[2px] w-[125px] border-[#a8a8ae] bg-[#f4f5fb] pl-5 text-[13px] text-[#666]">
              <span className="absolute top-0 left-[6px] font-['Liberation_Serif'] text-xs leading-[17px] font-bold text-black">
                T<sub className="text-[10px]">T</sub>
              </span>
            </Combo>,
            <Combo label="Font size" value="0" className="mx-1 w-[58px] border-[#a8a8ae] bg-[#f0f1f6] text-xs text-[#777]" />,
            "Bold", "Italic", "Underline", "Superscript", "Subscript", "Super-subscript", "Greek", "Increase font", "Decrease font",
            "Align left+", "Vertical lines+", "Font colour*",
          ]}
        />
        <Bar
          items={[
            "Fill colour*", "Pattern colour*", "Line colour*", "Lighting",
            <Combo label="Line style" value="" className="w-[58px] border-[#a8a8ae] bg-[#f0f1f6]">
              <span className="pointer-events-none absolute top-2 left-1 h-px w-8 bg-black" />
            </Combo>,
            <Combo label="Line width" value="0" className="ml-1 w-[58px] border-[#a8a8ae] bg-[#f0f1f6] text-xs text-[#777]" />,
            <Combo label="Line fill" value="" className="ml-[5px] w-[51px] border-transparent">
              <span className="pointer-events-none absolute top-0 left-0 h-4 w-9 border border-[#aaaab2] bg-[#f2f3fc]" />
            </Combo>,
            <Combo label="Border width" value="0" className="mr-1 w-[58px] border-[#a8a8ae] bg-[#f0f1f6] text-xs text-[#777]" />,
            "Hatch+", "Border style+", "Merge cells",
          ]}
        />
        <Bar className="flex-1" chevron items={["Mask M", "Mask X", "|"]} />
      </div>

      <div className="flex min-h-0 flex-1">
        <div className="flex w-5 flex-none flex-col gap-[15px] pt-[3px] text-[13px] leading-[18px] text-[#555]">
          {[
            { label: "项目管理器 (1)", size: "h-[112px]" },
            { label: "消息日志", size: "h-[75px]" },
            { label: "提示日志 (1)", size: "h-[101px]" },
          ].map(({ label, size }) => (
            <button
              key={label}
              className={`flex-none border-b border-[#c9c9c9] bg-[#f2f2f2] pt-[3px] pr-[2px] text-left whitespace-nowrap [text-orientation:sideways] [writing-mode:vertical-rl] ${size}`}
            >
              {label}
            </button>
          ))}
        </div>
        <div className="ml-[3px] flex w-[34px] flex-none flex-col gap-5">
          <SideBar
            wide
            items={[
              "Pointer", "Zoom in", "Zoom out", "Screen reader", "Data reader+", "Data selector", "Mask points+", "Draw data+", "Points", "Text",
              "Insert graph", "Arrow+", "Line+", "Rectangle+", "Hand", "Insert equation+", "Insert plot+", "Move axes", "Rotate 3D",
            ]}
          />
          <SideBar items={["Line width", "Contour", "Legend", "Asterisk", "Scale", "Time stamp", "Project stamp", "New table"]} />
        </div>
        <div className="flex min-w-0 flex-1 flex-col">
          <div className="relative min-h-0 flex-1 overflow-hidden border-t border-l-2 border-[#77777a] bg-[#ababab]">
            <Workbook />
          </div>
          <div className="flex h-[28px] flex-none overflow-hidden pt-px">
            <Bar
              items={[
                "Line plot+", "Scatter+", "Line + symbol+", "Column plot+", "Multi panel+", "Box chart+", "Area plot+", "Polar+", "Candlestick+", "Template",
              ]}
            />
            <Bar items={["3D bars+", "|", "3D surface+", "3D scatter+", "Heatmap+", "Profile plot+", "Image plot"]} />
            <Bar items={["Mask range", "Unmask range", "|", "Mask colour", "Swap mask", "Hide mask", "|", "Disable mask"]} />
            <Bar
              className="ml-auto"
              items={[
                "Flip left", "Flip right", "Rotate left", "Rotate right", "Widen", "Narrow", "Stretch up", "Perspective", "Fit frame", "Reset rotation", "Reset 3D",
                <Combo label="Rotation step" value="10" className="mx-[2px] w-[58px] border-[#a8a8ae] bg-[#f0f1f6] text-[11px] text-[#666]" />,
              ]}
            />
          </div>
        </div>
        <div className="mr-[5px] ml-[3px] flex w-6 flex-none flex-col">
          <SideBar
            items={[
              "Slide layers", "3D axes", "Axes right", "Axes up", "Exchange XY", "Run axes", "|", "One panel", "Four panels", "Six panels", "Merge graphs", "|",
              "Frame left", "Frame top", "Frame right", "Frame all", "Inset axes", "Inset image",
            ]}
          />
          <SideBar
            items={[
              "Align lefts", "Align rights", "|", "Align tops", "Align bottoms", "|", "Center vertical", "Center horizontal", "|",
              "Same width", "Same height", "|", "Distribute across", "Distribute down", "|",
            ]}
          />
        </div>
        <SidePanels />
      </div>

      <footer className="flex h-[19px] flex-none items-center border-t border-[#d5d5dc] bg-[#f0f0f0] pl-[35px] text-xs leading-[18px] whitespace-nowrap">
        <button className="text-[#245]">&lt;&lt;</button>
        <span className="ml-[3px] text-[13px]">【开始】菜单 <span className="text-[11px]">(F1)</span></span>
        <span className="ml-auto">平均值=0 求和=0 计数=0</span>
        <svg className="mx-[6px]" width="10" height="10"><path d="M0 0h9v6H2v4H0z" fill="#e00000" /></svg>
        <span>AU : 开</span>
        <span className="mr-[6px] ml-[3px] h-4 w-[7px] border-x border-[#d2d2d2]" />
        <span className="text-[11px]">1: [Book1]Sheet1!</span>
        <span className="ml-px border-x border-[#d2d2d2] px-1 text-[13px]">弧度</span>
        <span className="mr-[3px] ml-[2px]"><Grip /></span>
      </footer>

      <button aria-label="Origin Central" className="absolute bottom-0 left-[1px]">
        <svg width="30" height="30" fill="none">
          <circle cx="15" cy="15" r="14" fill="#e07060" stroke="#bb5546" />
          <path d="M6 4v22M12 2v26M18 2v26M24 4v22M3 9h24M1 15h28M3 21h24" stroke="#f09a88" strokeWidth=".8" />
          <path d="M6 23l6-7 5 1 7-11" stroke="#3d4c80" />
          <path d="M5 22h2v2H5zM11 15h2v2h-2zM16 16h2v2h-2zM23 5h2v2h-2z" fill="#284080" />
        </svg>
      </button>

      <p className="pointer-events-none absolute top-[383px] right-[2px] text-right text-base leading-5 whitespace-nowrap text-[#706565]/65 [text-shadow:2px_2px_3px_#ffc5c5]">
        微信公众号：探临科技
        <br />
        官网：<b>tanlkj.com</b>
      </p>
    </main>
  );
}
